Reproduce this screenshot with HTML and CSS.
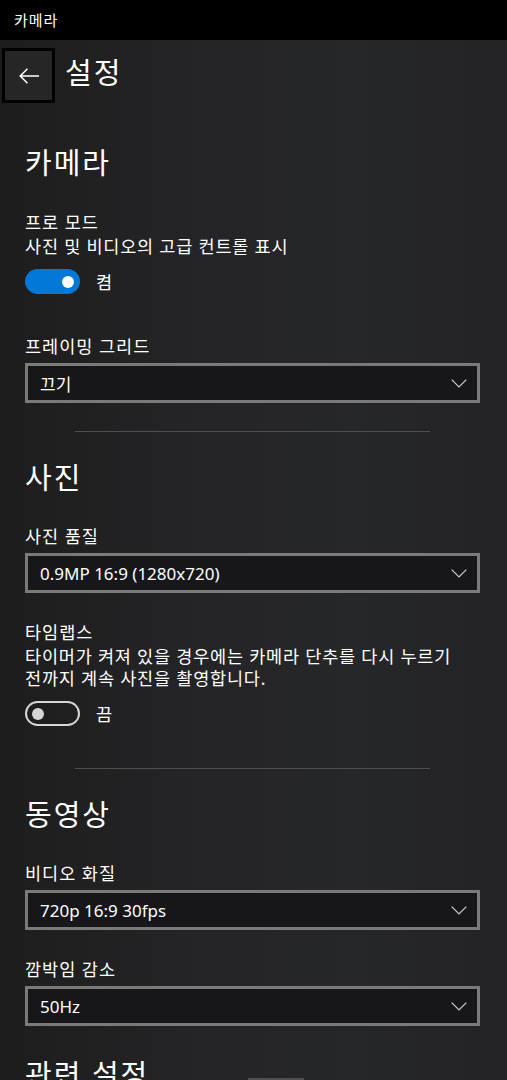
FILE: index.html
```html
<!DOCTYPE html>
<html lang="ko">
<head>
    <meta charset="UTF-8">
    <meta name="viewport" content="width=device-width, initial-scale=1.0">
    <title>카메라 설정</title>
    <link rel="stylesheet" href="styles.css">
</head>
<body>
    <div id="titlebar">카메라</div>

    <div class="page-header">
        <div class="back-button">
            <svg width="22" height="18" viewBox="0 0 22 18">
                <path d="M21 9H2.5M9.5 1.8L2.2 9l7.3 7.2" fill="none" stroke="#fff" stroke-width="1.5"/>
            </svg>
        </div>
        <div class="page-title">설정</div>
    </div>

    <div class="content">
        <h2 class="section-title first">카메라</h2>
        <div class="setting">
            <div class="label">프로 모드</div>
            <div class="desc">사진 및 비디오의 고급 컨트롤 표시</div>
            <div class="toggle-row">
                <div class="toggle on"><span class="knob"></span></div>
                <span class="toggle-text">켬</span>
            </div>
        </div>
        <div class="setting after-toggle">
            <div class="label">프레이밍 그리드</div>
            <div class="dropdown">
                <span>끄기</span>
                <svg class="chevron" width="16" height="9" viewBox="0 0 16 9"><path d="M0.7 0.7L8 8l7.3-7.3" fill="none" stroke="#cfcfcf" stroke-width="1.2"/></svg>
            </div>
        </div>
        <div class="divider"></div>

        <h2 class="section-title">사진</h2>
        <div class="setting">
            <div class="label">사진 품질</div>
            <div class="dropdown">
                <span>0.9MP 16:9 (1280x720)</span>
                <svg class="chevron" width="16" height="9" viewBox="0 0 16 9"><path d="M0.7 0.7L8 8l7.3-7.3" fill="none" stroke="#cfcfcf" stroke-width="1.2"/></svg>
            </div>
        </div>
        <div class="setting">
            <div class="label">타임랩스</div>
            <div class="desc">타이머가 켜져 있을 경우에는 카메라 단추를 다시 누르기 전까지 계속 사진을 촬영합니다.</div>
            <div class="toggle-row">
                <div class="toggle"><span class="knob"></span></div>
                <span class="toggle-text">끔</span>
            </div>
        </div>
        <div class="divider after-toggle"></div>

        <h2 class="section-title">동영상</h2>
        <div class="setting">
            <div class="label">비디오 화질</div>
            <div class="dropdown">
                <span>720p 16:9 30fps</span>
                <svg class="chevron" width="16" height="9" viewBox="0 0 16 9"><path d="M0.7 0.7L8 8l7.3-7.3" fill="none" stroke="#cfcfcf" stroke-width="1.2"/></svg>
            </div>
        </div>
        <div class="setting">
            <div class="label">깜박임 감소</div>
            <div class="dropdown">
                <span>50Hz</span>
                <svg class="chevron" width="16" height="9" viewBox="0 0 16 9"><path d="M0.7 0.7L8 8l7.3-7.3" fill="none" stroke="#cfcfcf" stroke-width="1.2"/></svg>
            </div>
        </div>

        <h2 class="section-title related">관련 설정</h2>
    </div>

    <div class="scroll-peek"></div>
</body>
</html>
```

FILE: styles.css
```css
body {
    margin: 0;
    height: 1080px;
    overflow: hidden;
    color: #fff;
    font-family: "Noto Sans", "Noto Sans CJK KR", sans-serif;
    word-break: keep-all;
    background: linear-gradient(90deg, #1d1d1e 0%, #242426 35%, #262729 70%, #232325 100%);
}
#titlebar {
    height: 40px;
    line-height: 40px;
    background-color: #000;
    padding-left: 14px;
    font-size: 15px;
    letter-spacing: 1px;
}
.page-header {
    display: flex;
    align-items: center;
    margin-top: 8px;
    padding-left: 2px;
}
.back-button {
    width: 47px;
    height: 49px;
    border: 3px solid #000;
    background-color: #262626;
    display: flex;
    align-items: center;
    justify-content: center;
}
.page-title {
    margin-left: 10px;
    font-size: 29px;
    letter-spacing: 2px;
    line-height: 40px;
    margin-top: -6px;
}
.content {
    padding-left: 25px;
    width: 455px;
}
.section-title {
    margin: 25px 0 0 0;
    font-size: 29px;
    letter-spacing: 2px;
    font-weight: normal;
    line-height: 40px;
}
.section-title.first {
    margin-top: 40px;
}
.section-title.related {
    margin-top: 29px;
}
.setting {
    margin-top: 27px;
}
.section-title + .setting {
    margin-top: 26px;
}
.section-title.first + .setting {
    margin-top: 27px;
}
.setting.after-toggle {
    margin-top: 40px;
}
.label {
    font-size: 17.5px;
    letter-spacing: 1px;
    line-height: 24px;
}
.desc {
    font-size: 17.5px;
    letter-spacing: 0.8px;
    line-height: 22px;
    margin-top: 1px;
}
.toggle-row {
    display: flex;
    align-items: center;
    margin-top: 12px;
    height: 25px;
}
.toggle {
    box-sizing: border-box;
    width: 55px;
    height: 25px;
    border-radius: 13px;
    border: 2px solid #d6d6d6;
    position: relative;
}
.toggle .knob {
    position: absolute;
    top: 4.5px;
    left: 4.5px;
    width: 12px;
    height: 12px;
    border-radius: 50%;
    background-color: #d6d6d6;
}
.toggle.on {
    background-color: #0078d7;
    border-color: #0078d7;
}
.toggle.on .knob {
    left: auto;
    right: 4.5px;
    background-color: #fff;
}
.toggle-text {
    margin-left: 16px;
    font-size: 17.5px;
}
.dropdown {
    box-sizing: border-box;
    margin-top: 5px;
    height: 40px;
    border: 3px solid #7a7a7a;
    background-color: #17171a;
    display: flex;
    align-items: center;
    justify-content: space-between;
    padding: 0 10px 0 12px;
    font-size: 17px;
}
.divider {
    margin: 28px 0 0 50px;
    width: 355px;
    height: 1px;
    background-color: #4e4e4e;
}
.divider.after-toggle {
    margin-top: 42px;
}
.divider + .section-title {
    margin-top: 26px;
}
.scroll-peek {
    position: fixed;
    left: 248px;
    bottom: 0;
    width: 56px;
    height: 2px;
    background-color: #4f4f4f;
}
```
